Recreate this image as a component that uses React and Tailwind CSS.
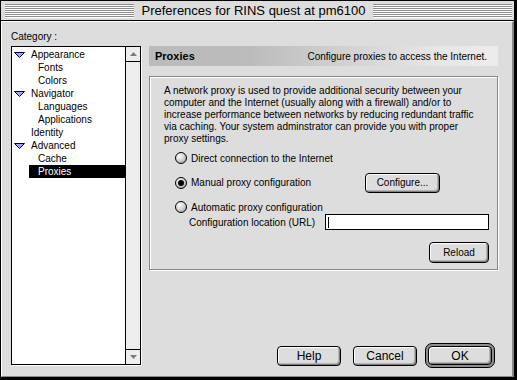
const categories = [
  { label: "Appearance", level: 0 },
  { label: "Fonts", level: 1 },
  { label: "Colors", level: 1 },
  { label: "Navigator", level: 0 },
  { label: "Languages", level: 1 },
  { label: "Applications", level: 1 },
  { label: "Identity", level: 0, leaf: true },
  { label: "Advanced", level: 0 },
  { label: "Cache", level: 1 },
  { label: "Proxies", level: 1, selected: true },
];

const Disclosure = () => (
  <svg width="11" height="6" viewBox="0 0 11 6" className="shrink-0">
    <polygon points="0.5,0.5 10.5,0.5 5.5,5.5" fill="#a0a0ff" stroke="#000040" strokeWidth="1" />
  </svg>
);

const Arrow = ({ down }) => (
  <svg width="7" height="4" viewBox="0 0 7 4">
    <polygon points={down ? "0,0 7,0 3.5,4" : "0,4 7,4 3.5,0"} fill="#7b7b7b" />
  </svg>
);

const Radio = ({ checked }) => (
  <span className="flex h-[12px] w-[12px] shrink-0 items-center justify-center rounded-full border border-black bg-[radial-gradient(circle_at_35%_30%,#ffffff_0%,#d8d8d8_45%,#8e8e8e_100%)]">
    {checked && <span className="h-[6px] w-[6px] rounded-full bg-black" />}
  </span>
);

const MacButton = ({ children, className = "" }) => (
  <div
    className={`flex items-center justify-center rounded-[4px] border border-black bg-[#dddddd] shadow-[inset_1px_1px_0_#ffffff,inset_-1px_-1px_0_#808080,inset_-2px_-2px_0_#b4b4b4] ${className}`}
  >
    {children}
  </div>
);

export default function App() {
  return (
    <div className="flex h-[380px] w-[517px] flex-col border-t border-l border-r-[3px] border-b-[3px] border-black bg-[#dddddd] font-['Liberation_Sans',Arial,sans-serif] text-black">
      {/* Title bar */}
      <div className="flex h-[20px] items-center border-b border-black bg-[#dddddd]">
        <div className="ml-[4px] h-[14px] w-[129px] bg-[repeating-linear-gradient(to_bottom,#8c8c8c_0px,#8c8c8c_1px,#ffffff_1px,#ffffff_2px)]" />
        <div className="flex-1 text-center text-[13px] leading-[20px] whitespace-nowrap">
          Preferences for RINS quest at pm6100
        </div>
        <div className="mr-[2px] h-[14px] w-[139px] bg-[repeating-linear-gradient(to_bottom,#8c8c8c_0px,#8c8c8c_1px,#ffffff_1px,#ffffff_2px)]" />
      </div>

      {/* Content */}
      <div className="flex flex-1 border-t border-l border-white border-r-2 border-b border-r-[#888888] border-b-[#888888] pt-[8px] pl-[9px]">
        {/* Category column */}
        <div className="flex w-[130px] flex-col">
          <div className="h-[13px] text-[10px] leading-[13px]">Category :</div>
          <div className="mt-[3px] flex h-[319px] border border-black bg-white shadow-[1px_1px_0_#ffffff]">
            <div className="w-[113px] pt-[1px] text-[10px] leading-[13px]">
              {categories.map((c) =>
                c.level === 0 ? (
                  <div key={c.label} className="flex h-[13px] items-center">
                    {c.leaf ? (
                      <span className="ml-[19px]">{c.label}</span>
                    ) : (
                      <>
                        <span className="ml-[2px]">
                          <Disclosure />
                        </span>
                        <span className="ml-[6px]">{c.label}</span>
                      </>
                    )}
                  </div>
                ) : (
                  <div
                    key={c.label}
                    className={`ml-[17px] h-[13px] pl-[9px] ${c.selected ? "bg-black text-white" : ""}`}
                  >
                    {c.label}
                  </div>
                )
              )}
            </div>
            <div className="flex w-[15px] flex-col border-l border-black bg-[#eeeeee]">
              <div className="flex h-[15px] items-center justify-center border-b border-black">
                <Arrow />
              </div>
              <div className="flex-1" />
              <div className="flex h-[15px] items-center justify-center border-t border-black">
                <Arrow down />
              </div>
            </div>
          </div>
        </div>

        {/* Right column */}
        <div className="ml-[8px] mt-[16px] flex w-[349px] flex-col">
          <div className="flex h-[20px] items-center justify-between bg-[linear-gradient(to_right,#bbbbbb_0%,#bbbbbb_28%,#e6e6e6_82%,#ececec_100%)] pl-[6px] pr-[11px]">
            <span className="text-[11px] font-bold">Proxies</span>
            <span className="text-[10px]">Configure proxies to access the Internet.</span>
          </div>

          <div className="mt-[10px] flex h-[194px] flex-col border border-[#888888] shadow-[inset_1px_1px_0_#ffffff,1px_1px_0_#ffffff] pt-[8px]">
            <p className="ml-[14px] text-[10px] leading-[12px] whitespace-nowrap">
              A network proxy is used to provide additional security between your
              <br />
              computer and the Internet (usually along with a firewall) and/or to
              <br />
              increase performance between networks by reducing redundant traffic
              <br />
              via caching. Your system adminstrator can provide you with proper
              <br />
              proxy settings.
            </p>

            <div className="ml-[25px] mt-[6px] flex h-[14px] items-center text-[10px]">
              <Radio />
              <span className="ml-[4px]">Direct connection to the Internet</span>
            </div>

            <div className="ml-[25px] mt-[8px] flex h-[19px] items-center text-[10px]">
              <Radio checked />
              <span className="ml-[4px] w-[174px]">Manual proxy configuration</span>
              <MacButton className="h-[20px] w-[75px]">Configure...</MacButton>
            </div>

            <div className="ml-[25px] mt-[8px] flex h-[14px] items-center text-[10px]">
              <Radio />
              <span className="ml-[4px]">Automatic proxy configuration</span>
            </div>

            <div className="ml-[39px] flex h-[16px] items-center text-[10px]">
              <span className="w-[136px]">Configuration location (URL)</span>
              <div className="flex h-[16px] w-[164px] items-center border border-black bg-white">
                <div className="ml-[2px] h-[11px] w-[1px] bg-black" />
              </div>
            </div>

            <div className="mt-[12px] mr-[8px] flex justify-end">
              <MacButton className="h-[21px] w-[60px] text-[10px]">Reload</MacButton>
            </div>
          </div>

          <div className="mt-[73px] flex items-center justify-end gap-[12px] pr-[3px] text-[12px]">
            <MacButton className="h-[20px] w-[64px]">Help</MacButton>
            <div className="flex items-center">
              <MacButton className="h-[20px] w-[64px]">Cancel</MacButton>
              <div className="ml-[8px] rounded-[7px] border border-black bg-[#8f8f8f] p-[2px]">
                <MacButton className="h-[19px] w-[64px]">OK</MacButton>
              </div>
            </div>
          </div>
        </div>
      </div>
    </div>
  );
}
